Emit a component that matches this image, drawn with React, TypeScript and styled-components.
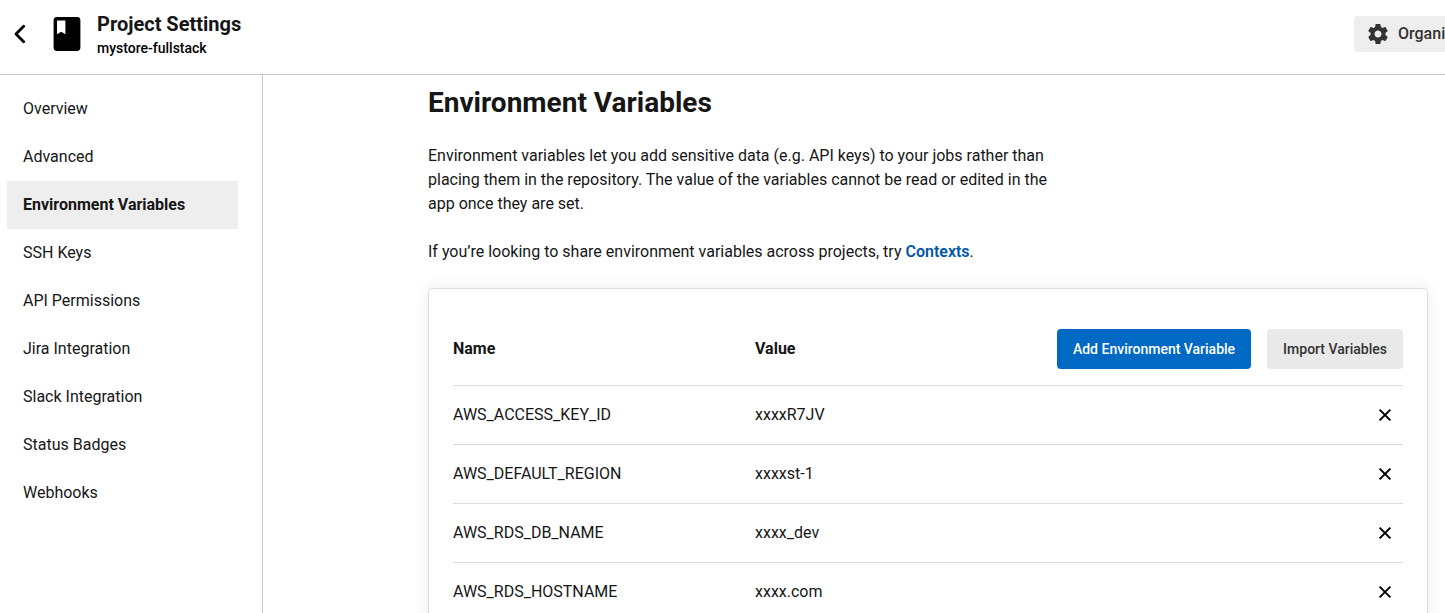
import React from 'react';
import styled, { createGlobalStyle, css } from 'styled-components';

const GlobalStyle = createGlobalStyle`
  *, *::before, *::after { box-sizing: border-box; }
  html, body { margin: 0; }
  body {
    background: #fff;
    color: #161616;
    font-family: Roboto, "Liberation Sans", sans-serif;
    font-size: 16px;
    line-height: 24px;
    -webkit-font-smoothing: antialiased;
  }
  button { font-family: inherit; cursor: pointer; }
`;

const Page = styled.div`
  display: flex;
  flex-direction: column;
  height: 100vh;
  overflow: hidden;
`;

const Header = styled.header`
  display: flex;
  align-items: center;
  flex: none;
  padding: 4px 0 10px 8px;
  border-bottom: 1px solid #c9c9c9;
  overflow: hidden;
`;

const IconButton = styled.button<{ $width: number }>`
  display: inline-flex;
  align-items: center;
  justify-content: center;
  width: ${({ $width }) => $width}px;
  height: 36px;
  padding: 0;
  border: 0;
  background: transparent;
  color: #000;
`;

const ProjectIcon = styled.svg`
  flex: none;
  margin: 0 16px 0 21px;
`;

const Heading = styled.div`
  display: flex;
  flex-direction: column;
  flex: 1;
  padding: 8px 0 4px;
`;

const HeadingTitle = styled.span`
  font-size: 20px;
  font-weight: 700;
  line-height: 24px;
`;

const HeadingProject = styled.span`
  color: #000;
  font-size: 14px;
  font-weight: 500;
  line-height: 24px;
`;

const HeaderAction = styled.div`
  flex: none;
  width: 91px;
`;

const OrganizationButton = styled.button`
  display: flex;
  align-items: center;
  gap: 8px;
  height: 36px;
  padding: 0 16px 0 12px;
  border: 0;
  border-radius: 4px;
  background: #eee;
  color: #333;
  font-size: 16px;
  font-weight: 500;
  line-height: 24px;
  white-space: nowrap;
`;

const Body = styled.div`
  display: flex;
  flex: 1;
  min-height: 0;
`;

const Sidebar = styled.nav`
  flex: none;
  width: 263px;
  padding: 10px 24px 0 7px;
  border-right: 1px solid #c9c9c9;
`;

const NavLink = styled.a<{ $active?: boolean }>`
  display: block;
  padding: 12px 16px;
  color: #161616;
  text-decoration: none;
  ${({ $active }) =>
    $active &&
    css`
      background: #eee;
      font-weight: 700;
    `}
`;

const Main = styled.main`
  flex: 1;
  min-width: 0;
  padding: 9px 17px 24px 165px;
  overflow: hidden;
`;

const Title = styled.h1`
  margin: 0 0 22px;
  font-size: 28px;
  font-weight: 700;
  line-height: 38px;
`;

const Paragraph = styled.p`
  max-width: 632px;
  margin: 0 0 24px;
`;

const TextLink = styled.a`
  color: #0057a8;
  font-weight: 600;
  text-decoration: none;
`;

const Card = styled.section`
  padding: 40px 24px 24px;
  border: 1px solid #ddd;
  border-radius: 4px;
  box-shadow: 0 0 16px rgba(0, 0, 0, 0.08);
`;

const Table = styled.table`
  width: 100%;
  border-collapse: separate;
  border-spacing: 0;
`;

const HeadCell = styled.th<{ $width?: number }>`
  width: ${({ $width }) => ($width ? `${$width}px` : 'auto')};
  padding: 0 0 16px;
  border-bottom: 1px solid #ddd;
  font-weight: 700;
  text-align: left;
  vertical-align: middle;
`;

const Cell = styled.td<{ $end?: boolean }>`
  height: 59px;
  padding: 0;
  border-bottom: 1px solid #ddd;
  text-align: ${({ $end }) => ($end ? 'right' : 'left')};
  vertical-align: middle;
`;

const Actions = styled.div`
  display: flex;
  justify-content: flex-end;
  gap: 16px;
`;

const Button = styled.button<{ $primary?: boolean }>`
  height: 40px;
  padding: 0 16px;
  border: 0;
  border-radius: 4px;
  background: ${({ $primary }) => ($primary ? '#0069c4' : '#e9e9e9')};
  color: ${({ $primary }) => ($primary ? '#fff' : '#333')};
  font-size: 14px;
  font-weight: 500;
  line-height: 24px;
  white-space: nowrap;
`;

const BlockIcon = styled.svg`
  display: block;
  flex: none;
`;

const navItems = [
  'Overview',
  'Advanced',
  'Environment Variables',
  'SSH Keys',
  'API Permissions',
  'Jira Integration',
  'Slack Integration',
  'Status Badges',
  'Webhooks',
];

const variables = [
  { name: 'AWS_ACCESS_KEY_ID', value: 'xxxxR7JV' },
  { name: 'AWS_DEFAULT_REGION', value: 'xxxxst-1' },
  { name: 'AWS_RDS_DB_NAME', value: 'xxxx_dev' },
  { name: 'AWS_RDS_HOSTNAME', value: 'xxxx.com' },
];

const ChevronIcon = () => (
  <BlockIcon width="24" height="24" viewBox="0 0 24 24" fill="none" aria-hidden="true">
    <path d="M15.7 4.2 8 12l7.7 7.8" stroke="currentColor" strokeWidth="2.8" strokeLinecap="round" strokeLinejoin="round" />
  </BlockIcon>
);

const BookIcon = () => (
  <ProjectIcon width="28" height="34" viewBox="0 0 28 34" aria-hidden="true">
    <path
      fillRule="evenodd"
      d="M4 0h20a3.4 3.4 0 0 1 3.4 3.4v27.2A3.4 3.4 0 0 1 24 34H4a3.4 3.4 0 0 1-3.4-3.4V3.4A3.4 3.4 0 0 1 4 0Zm0 3.6v13.6l4.2-2.5 4.2 2.5V3.6Z"
    />
  </ProjectIcon>
);

const GearIcon = () => (
  <BlockIcon width="24" height="24" viewBox="0 0 24 24" fill="currentColor" aria-hidden="true">
    <path d="M19.43 12.98c.04-.32.07-.64.07-.98s-.03-.66-.07-.98l2.11-1.65c.19-.15.24-.42.12-.64l-2-3.46c-.12-.22-.39-.3-.61-.22l-2.49 1c-.52-.4-1.08-.73-1.69-.98l-.38-2.65A.488.488 0 0 0 14 2h-4c-.25 0-.46.18-.49.42l-.38 2.65c-.61.25-1.17.59-1.69.98l-2.49-1c-.23-.09-.49 0-.61.22l-2 3.46c-.13.22-.07.49.12.64l2.11 1.65c-.04.32-.07.65-.07.98s.03.66.07.98l-2.11 1.65c-.19.15-.24.42-.12.64l2 3.46c.12.22.39.3.61.22l2.49-1c.52.4 1.08.73 1.69.98l.38 2.65c.03.24.24.42.49.42h4c.25 0 .46-.18.49-.42l.38-2.65c.61-.25 1.17-.59 1.69-.98l2.49 1c.23.09.49 0 .61-.22l2-3.46c.12-.22.07-.49-.12-.64l-2.11-1.65ZM12 15.5c-1.93 0-3.5-1.57-3.5-3.5s1.57-3.5 3.5-3.5 3.5 1.57 3.5 3.5-1.57 3.5-3.5 3.5Z" />
  </BlockIcon>
);

const CloseIcon = () => (
  <BlockIcon width="14" height="14" viewBox="0 0 14 14" fill="none" aria-hidden="true">
    <path d="M1.6 1.6l10.8 10.8M12.4 1.6 1.6 12.4" stroke="currentColor" strokeWidth="2" />
  </BlockIcon>
);

export default function App() {
  return (
    <>
      <GlobalStyle />
      <Page>
        <Header>
          <IconButton $width={24} type="button" aria-label="Back">
            <ChevronIcon />
          </IconButton>
          <BookIcon />
          <Heading>
            <HeadingTitle>Project Settings</HeadingTitle>
            <HeadingProject>mystore-fullstack</HeadingProject>
          </Heading>
          <HeaderAction>
            <OrganizationButton type="button">
              <GearIcon />
              Organization Settings
            </OrganizationButton>
          </HeaderAction>
        </Header>
        <Body>
          <Sidebar aria-label="Project settings">
            {navItems.map((item) => {
              const active = item === 'Environment Variables';
              return (
                <NavLink key={item} href="#" $active={active} aria-current={active ? 'page' : undefined}>
                  {item}
                </NavLink>
              );
            })}
          </Sidebar>
          <Main>
            <Title>Environment Variables</Title>
            <Paragraph>
              Environment variables let you add sensitive data (e.g. API keys) to your jobs rather than placing them in
              the repository. The value of the variables cannot be read or edited in the app once they are set.
            </Paragraph>
            <Paragraph>
              If you’re looking to share environment variables across projects, try <TextLink href="#">Contexts</TextLink>.
            </Paragraph>
            <Card>
              <Table>
                <thead>
                  <tr>
                    <HeadCell $width={302} scope="col">Name</HeadCell>
                    <HeadCell scope="col">Value</HeadCell>
                    <HeadCell $width={346}>
                      <Actions>
                        <Button $primary type="button">Add Environment Variable</Button>
                        <Button type="button">Import Variables</Button>
                      </Actions>
                    </HeadCell>
                  </tr>
                </thead>
                <tbody>
                  {variables.map(({ name, value }) => (
                    <tr key={name}>
                      <Cell>{name}</Cell>
                      <Cell>{value}</Cell>
                      <Cell $end>
                        <IconButton $width={36} type="button" aria-label={`Delete ${name}`}>
                          <CloseIcon />
                        </IconButton>
                      </Cell>
                    </tr>
                  ))}
                </tbody>
              </Table>
            </Card>
          </Main>
        </Body>
      </Page>
    </>
  );
}
